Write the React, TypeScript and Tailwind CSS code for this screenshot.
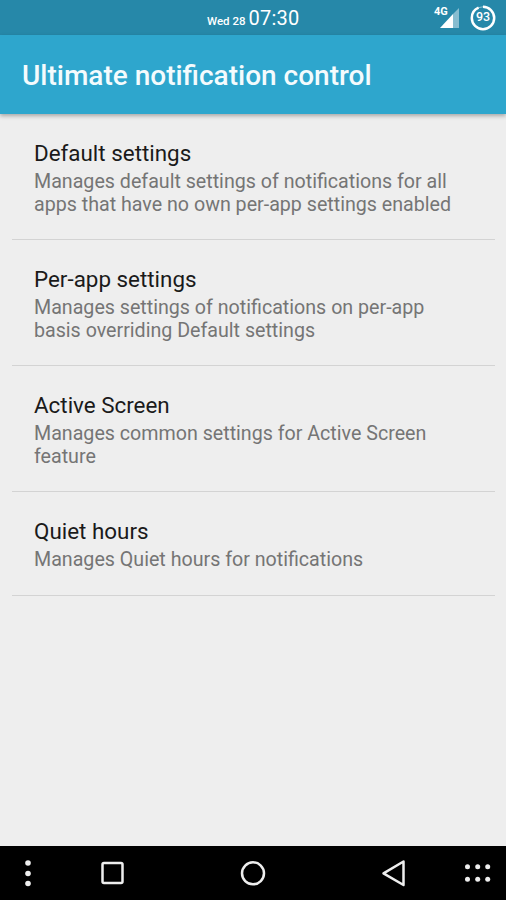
const settings = [
  {
    title: "Default settings",
    lines: ["Manages default settings of notifications for all", "apps that have no own per-app settings enabled"],
  },
  {
    title: "Per-app settings",
    lines: ["Manages settings of notifications on per-app", "basis overriding Default settings"],
  },
  {
    title: "Active Screen",
    lines: ["Manages common settings for Active Screen", "feature"],
  },
  {
    title: "Quiet hours",
    lines: ["Manages Quiet hours for notifications"],
  },
];

function StatusBar() {
  return (
    <div className="h-[35px] bg-[#2688a9] flex items-center text-white shrink-0">
      <div className="ml-[207px] w-[92px] shrink-0 flex items-baseline whitespace-nowrap mt-[1px]">
        <span className="text-[11.5px] font-medium mr-[3px]">Wed 28</span>
        <span className="text-[20px] tracking-[0.2px]">07:30</span>
      </div>
      <span className="ml-[135px] mb-[12px] text-[11px] font-bold leading-none w-[6px] whitespace-nowrap">4G</span>
      <svg width="20" height="20" viewBox="0 0 20 20" className="mt-[1px] shrink-0">
        <polygon points="0,20 13,6 13,20" fill="#ffffff" />
        <polygon points="13,6 19,0 19,20 13,20" fill="#ffffff" fillOpacity="0.45" />
      </svg>
      <div className="ml-[10px] relative w-[26px] h-[26px] shrink-0 flex items-center justify-center">
        <svg width="26" height="26" viewBox="0 0 26 26" className="absolute inset-0">
          <circle cx="13" cy="13" r="11.2" fill="none" stroke="#ffffff" strokeOpacity="0.5" strokeWidth="1" />
          <circle
            cx="13"
            cy="13"
            r="11.2"
            fill="none"
            stroke="#ffffff"
            strokeWidth="2.5"
            strokeDasharray="65.4 70.4"
            transform="rotate(-90 13 13)"
          />
        </svg>
        <span className="text-[12.5px] font-medium leading-none">93</span>
      </div>
    </div>
  );
}

function NavBar() {
  return (
    <div className="h-[54px] bg-black shrink-0">
      <svg width="506" height="54" viewBox="0 0 506 54" fill="none" stroke="#eeeeee" strokeWidth="2.5">
        <circle cx="28" cy="17" r="2.8" fill="#eeeeee" stroke="none" />
        <circle cx="28" cy="27.5" r="2.8" fill="#eeeeee" stroke="none" />
        <circle cx="28" cy="37.5" r="2.8" fill="#eeeeee" stroke="none" />
        <rect x="102.5" y="17" width="20" height="20" rx="1.5" />
        <circle cx="253" cy="27.3" r="11" />
        <path d="M403.5 15.5 L383.5 27.3 L403.5 39 Z" strokeLinejoin="round" />
        <circle cx="467.5" cy="20.8" r="2.5" fill="#eeeeee" stroke="none" />
        <circle cx="477.7" cy="20.8" r="2.5" fill="#eeeeee" stroke="none" />
        <circle cx="487.7" cy="20.8" r="2.5" fill="#eeeeee" stroke="none" />
        <circle cx="467.5" cy="33.3" r="2.5" fill="#eeeeee" stroke="none" />
        <circle cx="477.7" cy="33.3" r="2.5" fill="#eeeeee" stroke="none" />
        <circle cx="487.7" cy="33.3" r="2.5" fill="#eeeeee" stroke="none" />
      </svg>
    </div>
  );
}

export default function App() {
  return (
    <div className="w-[506px] h-[900px] flex flex-col bg-[#eeeeee] font-['Roboto',sans-serif] overflow-hidden">
      <StatusBar />
      <header className="h-[79px] bg-[#2ea6cd] flex items-center pl-[22px] shadow-[0_2px_4px_rgba(0,0,0,0.3)] shrink-0 z-10">
        <h1 className="text-[28px] font-medium text-[#f4fbfd] mt-[3px]">Ultimate notification control</h1>
      </header>
      <main className="flex-1 pl-[12px] pr-[11px]">
        {settings.map((item, i) => (
          <div
            key={item.title}
            className={`${i === 3 ? "h-[104px]" : "h-[126px]"} pl-[22px] pt-[25px] border-b border-[#d3d3d3]`}
          >
            <div className="text-[22.4px] leading-[28px] mb-[3px] text-[#1a1a1a]">{item.title}</div>
            {item.lines.map((line) => (
              <div key={line} className="text-[19.65px] leading-[23px] text-[#757575]">{line}</div>
            ))}
          </div>
        ))}
      </main>
      <NavBar />
    </div>
  );
}
